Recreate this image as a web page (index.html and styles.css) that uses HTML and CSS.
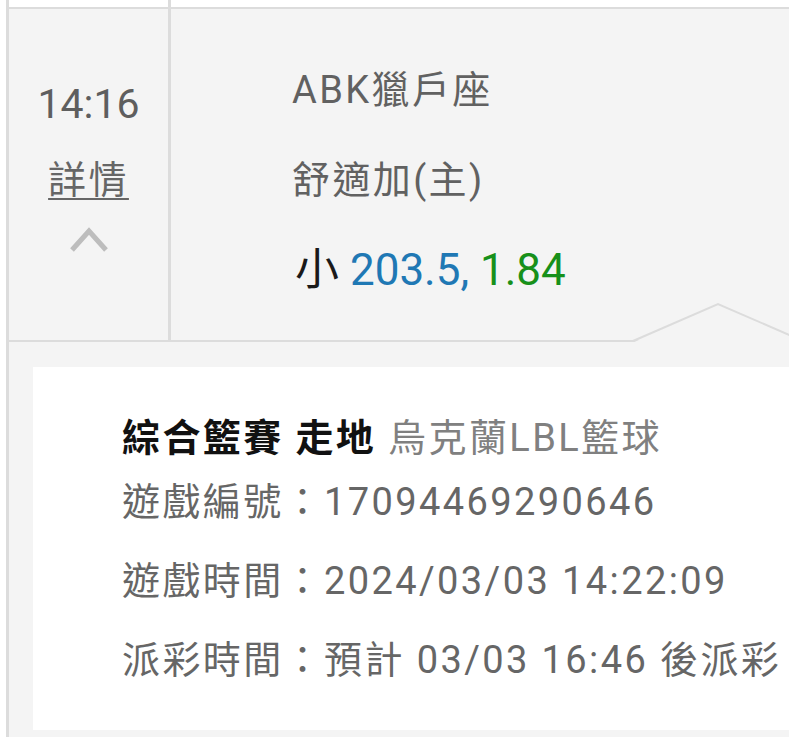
FILE: index.html
```html
<!DOCTYPE html>
<html lang="zh-Hant">
<head>
    <meta charset="UTF-8">
    <meta name="viewport" content="width=device-width, initial-scale=1.0">
    <title>注單詳情</title>
    <link rel="stylesheet" href="styles.css">
</head>
<body>

<div class="bet-list">
    <div class="bet-row bet-row-prev">
        <div class="bet-time"></div>
        <div class="bet-info"></div>
    </div>

    <div class="bet-row bet-row-open">
        <div class="bet-time">
            <div class="time">14:16</div>
            <a class="detail-link">詳情</a>
            <svg class="chevron" width="38" height="28" viewBox="0 0 38 28">
                <polyline points="2,25 19,6 36,25" fill="none" stroke="#bdbdbd" stroke-width="5"/>
            </svg>
        </div>
        <div class="bet-info">
            <div class="team">ABK獵戶座</div>
            <div class="pick">舒適加(主)</div>
            <div class="odds">小 <span class="odds-line">203.5,</span> <span class="odds-price">1.84</span></div>
        </div>
        <!-- pointer that opens into the detail panel -->
        <svg class="pointer" width="200" height="46" viewBox="0 0 200 46">
            <polygon points="10,44 98,4 186,44" fill="#f4f4f4"/>
            <polyline points="13,41 98,4 183,41" fill="none" stroke="#dcdcdc" stroke-width="2"/>
        </svg>
    </div>

    <div class="bet-detail">
        <div class="detail-card">
            <div class="detail-title"><b>綜合籃賽 走地</b> <span class="league">烏克蘭LBL籃球</span></div>
            <div class="detail-line">遊戲編號：17094469290646</div>
            <div class="detail-line">遊戲時間：2024/03/03 14:22:09</div>
            <div class="detail-line">派彩時間：預計 03/03 16:46 後派彩</div>
        </div>
    </div>
</div>

</body>
</html>
```

FILE: styles.css
```css
body {
    margin: 0;
    background-color: #fff;
    font-family: Roboto, "Noto Sans CJK TC", sans-serif;
    font-size: 38px;
    letter-spacing: 2.4px;
    color: #666;
}

.bet-list {
    margin-left: 6px;
    border-left: 3px solid #dcdcdc;
    background-color: #f4f4f4;
    overflow: hidden;
}

.bet-row {
    display: grid;
    grid-template-columns: 162px 1fr;
    border-bottom: 2px solid #dcdcdc;
}

.bet-row-prev {
    height: 7px;
    background-color: #fff;
}

.bet-row-open {
    height: 331px;
    position: relative;
}

.bet-time {
    border-right: 3px solid #dcdcdc;
    display: flex;
    flex-direction: column;
    align-items: center;
}

.bet-row-open .bet-time {
    padding-top: 70px;
}

.time {
    font-size: 41px;
    line-height: 50px;
    letter-spacing: 0;
    color: #5e5e5e;
}

.detail-link {
    margin-top: 26px;
    line-height: 50px;
    color: #666;
    text-decoration: underline;
    text-decoration-thickness: 2px;
    text-underline-offset: 5px;
}

.chevron {
    display: block;
    margin-top: 20px;
}

.bet-info {
    padding: 36px 0 0 121px;
    line-height: 90px;
    white-space: nowrap;
}

.team, .pick {
    color: #616161;
}

.odds {
    margin-left: 3px;
    font-size: 44px;
    letter-spacing: 0;
    color: #1a1a1a;
}

.odds-line {
    color: #1f78b4;
}

.odds-price {
    color: #17901a;
}

.pointer {
    position: absolute;
    left: 611px;
    top: 291px;
}

.bet-detail {
    padding: 25px 0 7px 24px;
}

.detail-card {
    background-color: #fff;
    padding: 46px 0 30px 89px;
    white-space: nowrap;
}

.detail-title {
    line-height: 50px;
}

.detail-title b {
    color: #111;
    font-weight: 700;
}

.league {
    color: #808080;
}

.detail-line {
    line-height: 79px;
    color: #666;
}
```
